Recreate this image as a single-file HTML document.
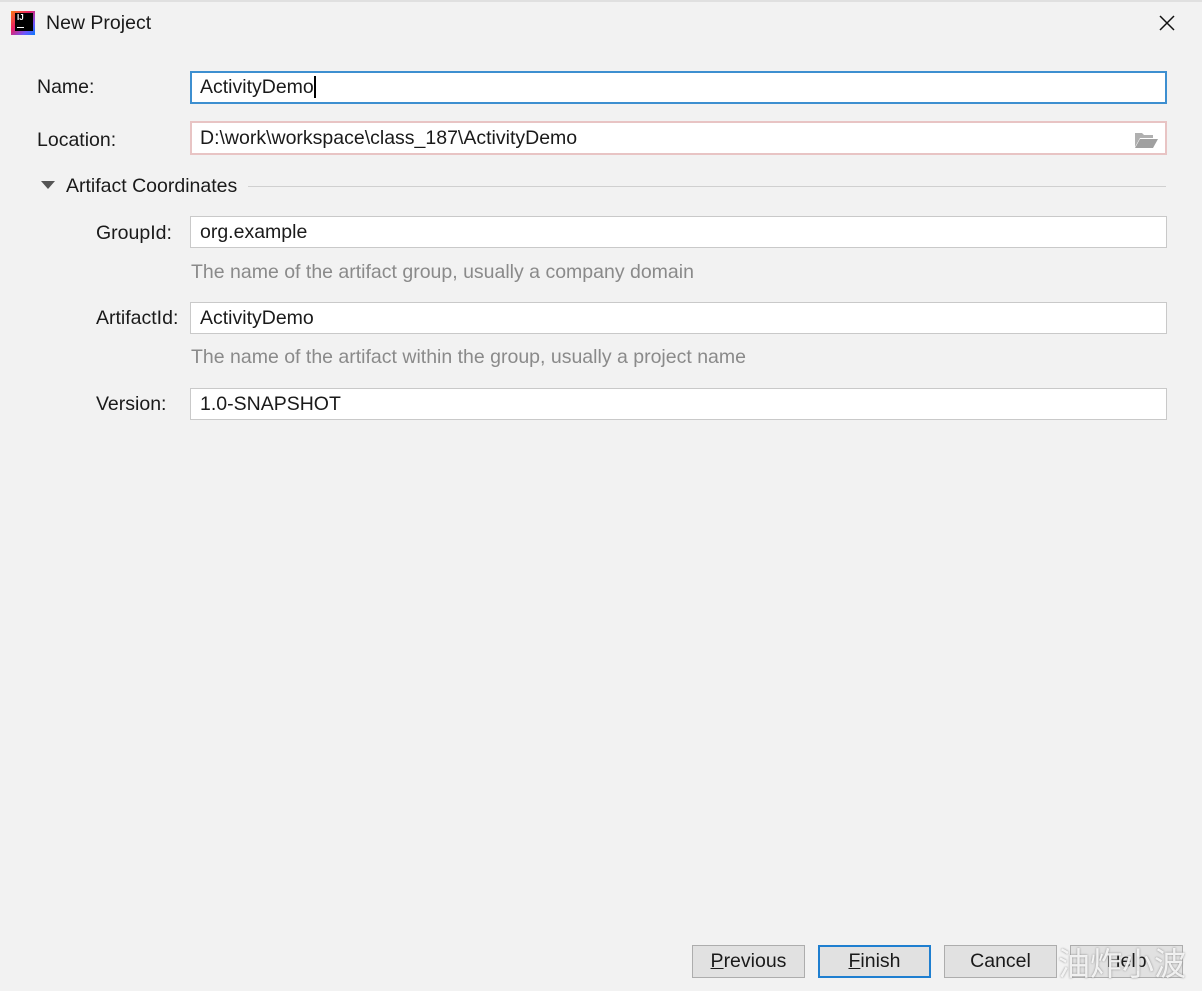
<!DOCTYPE html>
<html><head><meta charset="utf-8"><style>
body{margin:0;width:1202px;height:991px;background:#f2f2f2;font-family:"Liberation Sans","Noto Sans CJK SC",sans-serif;font-size:19.5px;color:#1a1a1a;position:relative;overflow:hidden}
.a{position:absolute}
.in{position:absolute;left:190px;width:977px;height:32px;background:#fff;border:1px solid #c9c9c9;box-sizing:border-box;padding-left:9px;line-height:30px}
.lbl{position:absolute;line-height:20px}
.hint{position:absolute;left:191px;color:#8a8a8a}
.btn{position:absolute;top:945px;width:113px;height:33px;box-sizing:border-box;border:1px solid #adadad;background:#e1e1e1;text-align:center;line-height:31px}
</style></head><body>
<div class="a" style="left:0;top:0;width:1202px;height:2px;background:#e0e0e0"></div>
<div class="a" style="left:11px;top:11px;width:24px;height:24px;background:linear-gradient(135deg,#f97a12,#e91e63 40%,#6b57ff 75%,#087cfa)"></div>
<div class="a" style="left:15px;top:13px;width:18px;height:18px;background:#000;color:#fff;font-size:8px;font-weight:bold;line-height:10px;padding-left:2px;box-sizing:border-box">IJ<div style="position:absolute;left:2px;bottom:3px;width:7px;height:1.5px;background:#fff"></div></div>
<div class="lbl" style="left:46px;top:13px;font-size:19.5px">New Project</div>
<svg class="a" style="left:1159px;top:15px" width="16" height="16" viewBox="0 0 16 16"><path d="M1 1L15 15M15 1L1 15" stroke="#111" stroke-width="1.5"/></svg>

<div class="lbl" style="left:37px;top:77px">Name:</div>
<div class="in" style="top:71px;height:33px;border:2px solid #3d8fd0;padding-left:8px;line-height:29px">ActivityDemo<span style="display:inline-block;width:2px;height:22px;background:#000;vertical-align:-5px"></span></div>
<div class="lbl" style="left:37px;top:130px">Location:</div>
<div class="in" style="top:121px;height:34px;border:2px solid #e8c4c4;padding-left:8px;line-height:30px">D:\work\workspace\class_187\ActivityDemo
<svg class="a" style="left:942px;top:8px" width="24" height="17" viewBox="0 0 24 17"><path d="M1 2h7l2 2h9v3H6L1 16z" fill="#b0b0b0"/><path d="M6 8h18l-5 9H1z" fill="#a0a0a0"/></svg></div>

<div class="a" style="left:41px;top:181px;width:0;height:0;border-left:7px solid transparent;border-right:7px solid transparent;border-top:8px solid #555"></div>
<div class="lbl" style="left:66px;top:176px">Artifact Coordinates</div>
<div class="a" style="left:248px;top:186px;width:918px;height:1px;background:#d0d0d0"></div>

<div class="lbl" style="left:96px;top:223px">GroupId:</div>
<div class="in" style="top:216px">org.example</div>
<div class="hint" style="top:261px">The name of the artifact group, usually a company domain</div>
<div class="lbl" style="left:96px;top:308px">ArtifactId:</div>
<div class="in" style="top:302px">ActivityDemo</div>
<div class="hint" style="top:346px">The name of the artifact within the group, usually a project name</div>
<div class="lbl" style="left:96px;top:394px">Version:</div>
<div class="in" style="top:388px">1.0-SNAPSHOT</div>

<div class="btn" style="left:692px"><u>P</u>revious</div>
<div class="btn" style="left:818px;border:2px solid #1f7fd0;line-height:29px"><u>F</u>inish</div>
<div class="btn" style="left:944px">Cancel</div>
<div class="btn" style="left:1070px">Help</div>
<div class="lbl" style="left:1058px;top:946px;font-size:32px;color:rgba(255,255,255,.85);text-shadow:0 0 2px #888;line-height:36px">油炸小波</div>
</body></html>
